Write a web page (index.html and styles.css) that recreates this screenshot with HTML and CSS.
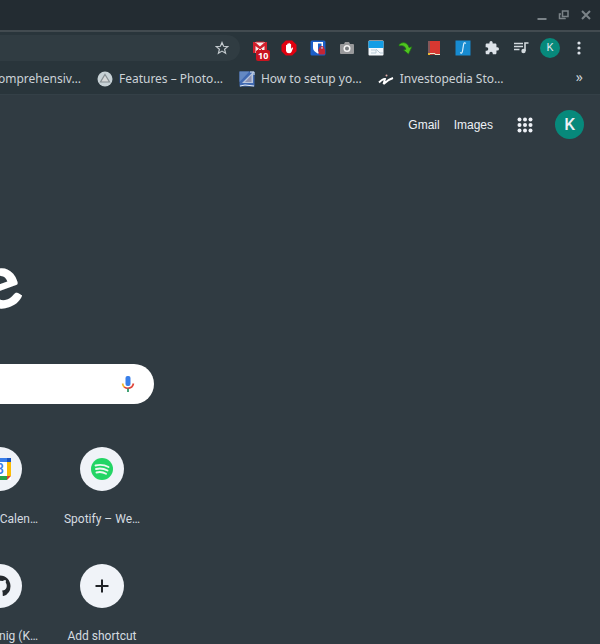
FILE: index.html
```html
<!DOCTYPE html>
<html lang="en">
<head>
<meta charset="utf-8">
<title>New Tab</title>
<link rel="stylesheet" href="styles.css">
</head>
<body>
<div class="titlebar">
  <button class="win" aria-label="Minimize"><svg width="12" height="12" viewBox="0 0 12 12"><path d="M1.500 10h9" stroke="#7b8388" stroke-width="2"/></svg></button>
  <button class="win" aria-label="Restore"><svg width="12" height="12" viewBox="0 0 12 12" fill="none" stroke="#7b8388" stroke-width="1.500"><path d="M4.500 2h5.500v5.500h-5.500zM3 5H1.500v4.500H7V9"/></svg></button>
  <button class="win" aria-label="Close"><svg width="12" height="12" viewBox="0 0 12 12"><path d="M2 2l8 8M10 2l-8 8" stroke="#7b8388" stroke-width="2"/></svg></button>
</div>
<div class="toolbar">
  <div class="omnibox">
    <button class="star" aria-label="Bookmark"><svg width="14" height="14" viewBox="0 0 14 14"><path d="M7 1.500l1.600 3.800 4.100.3-3.100 2.700 1 4L7 10.100l-3.600 2.200 1-4L1.300 5.600l4.100-.3z" fill="none" stroke="#c3cace" stroke-width="1.200"/></svg></button>
  </div>
  <div class="extensions">
    <button class="ext" aria-label="Mail checker"><svg width="16" height="16" viewBox="0 0 16 16"><path d="M1 2h14v11H1z" fill="#f5eeee"/><path d="M1 13V2h2l5 4.500L13 2h2v11h-2.500V6L8 9.500 3.500 6v7z" fill="#d21f2b"/><path d="M4 12l3-3M12 12L9 9M4 2h8" stroke="#d21f2b"/></svg><span class="count">10</span></button>
    <button class="ext" aria-label="Ad blocker"><svg width="16" height="16" viewBox="0 0 16 16"><path d="M4.800.5h6.400l4.300 4.300v6.400l-4.300 4.300H4.800L.5 11.200V4.800z" fill="#e0000f"/><path d="M5 9V5.200q.6-.8 1.200 0V4q.7-.9 1.300 0v-.8q.7-.8 1.300 0V4q.8-.8 1.300.2V9l1-1.500q1-.3 1 .4L10.500 12q-.7 1.300-2.500 1.300-2.500 0-3-2.300z" fill="#fff"/></svg></button>
    <button class="ext" aria-label="Password manager"><svg width="16" height="16" viewBox="0 0 16 16"><rect x=".5" y=".5" width="15" height="15" rx="1.500" fill="#1b5fc9"/><path d="M3 2h10v6q0 3-5 5.700Q3 11 3 8z" fill="#fff"/><path d="M8 3.500h3.500V8q0 2-3.500 4z" fill="#1b5fc9"/><rect x="8.500" y="8.500" width="6.500" height="6" rx="1" fill="#c52634"/><path d="M10 9V7.500q1.700-2 3.400 0V9" fill="none" stroke="#c52634" stroke-width="1.200"/></svg></button>
    <button class="ext" aria-label="Screenshot"><svg width="16" height="16" viewBox="0 0 16 16"><path d="M2 4h3l1-2h4l1 2h3q1 0 1 1v8q0 1-1 1H2q-1 0-1-1V5q0-1 1-1z" fill="#98999b"/><circle cx="8" cy="8.500" r="3.500" fill="#f4f4f4"/><circle cx="8" cy="8.500" r="2" fill="#777b7e"/></svg></button>
    <button class="ext" aria-label="Window tool"><svg width="16" height="16" viewBox="0 0 16 16"><rect x=".5" y=".5" width="15" height="15" rx="1" fill="#f4f8fb"/><path d="M.5 1h15v7H.5z" fill="#139de5"/><path d="M3 10h5v3H3M8 9l4 4h3" fill="none" stroke="#b9cbd7"/></svg></button>
    <button class="ext" aria-label="Download tool"><svg width="16" height="16" viewBox="0 0 16 16"><path d="M2 4.500Q7 .5 11 5l1 2.500 3-.8-3.500 7.500L6.500 10l2.500-.8Q7.500 4.500 2 6z" fill="#4fc51f" stroke="#1c6518" stroke-width=".7"/></svg></button>
    <button class="ext" aria-label="Dictionary"><svg width="16" height="16" viewBox="0 0 16 16"><path d="M3.500 1H14v13l-10 1z" fill="#d83831"/><path d="M2 1h2v12.500L2 14z" fill="#85575a"/><path d="M2.500 13.500H9v1H14" fill="none" stroke="#ede5c7"/><path d="M2 13h2v2H2z" fill="#efb933"/></svg></button>
    <button class="ext" aria-label="Function tool"><svg width="16" height="16" viewBox="0 0 16 16"><path d="M.5.5h15v15H.5z" fill="#178bd0"/><path d="M10.800 3.500Q9 1.500 8.500 5L7.500 11Q7 14.200 5.200 12.500" fill="none" stroke="#d8effc" stroke-width="1.200"/></svg></button>
    <button class="ext" aria-label="Extensions"><svg width="14" height="14" viewBox="1 1 22 22"><path fill="#dce2e8" d="M20.500 11H19V7c0-1.100-.9-2-2-2h-4V3.500a2.500 2.500 0 0 0-5 0V5H4c-1.100 0-2 .9-2 2v3.800h1.500a2.700 2.700 0 0 1 0 5.400H2V20c0 1.100.9 2 2 2h3.800v-1.500a2.700 2.700 0 0 1 5.400 0V22H17c1.100 0 2-.9 2-2v-4h1.500a2.500 2.500 0 0 0 0-5z"/></svg></button>
    <button class="ext" aria-label="Media"><svg width="16" height="16" viewBox="0 0 16 16"><path d="M1 3.500h9M1 6.500h9M1 9.500h5.500" stroke="#d3dade" stroke-width="1.500"/><path d="M12 11V3h3.500" fill="none" stroke="#d3dade" stroke-width="1.600"/><circle cx="10.500" cy="11" r="2.200" fill="#d3dade"/></svg></button>
    <button class="ext small-avatar" aria-label="Profile">K</button>
    <button class="ext" aria-label="Menu"><svg width="16" height="16" viewBox="0 0 16 16" fill="#dce2e8"><circle cx="8" cy="3" r="1.600"/><circle cx="8" cy="8" r="1.600"/><circle cx="8" cy="13" r="1.600"/></svg></button>
  </div>
</div>
<nav class="bookmarks">
  <a class="bookmark first" href="#">omprehensiv…</a>
  <a class="bookmark" href="#"><svg width="16" height="16" viewBox="0 0 16 16"><circle cx="8" cy="8" r="7.500" fill="#c7d2d6"/><path d="M8 3.500l4.500 7.500h-9z" fill="#d6d9d9" stroke="#858e92" stroke-width="1.200"/></svg>Features – Photo…</a>
  <a class="bookmark" href="#"><svg width="16" height="16" viewBox="0 0 16 16"><path d="M.5.5h15v15H.5z" fill="#416ab2"/><path d="M.5.5h10L.5 11z" fill="#6489c3"/><path d="M14 1v11H3z" fill="#b8c6dd"/><path d="M12.500 4v7H6z" fill="#8d91af"/><path d="M1 15l5-1 9 1M11 1h4v3" fill="none" stroke="#e3ebf3"/></svg>How to setup yo…</a>
  <a class="bookmark" href="#"><svg width="16" height="16" viewBox="0 0 16 16"><path d="M1 11.500Q5 7.500 7 8L5.500 13Q10 8.500 15 7" fill="none" stroke="#fff" stroke-width="1.900"/><circle cx="8.500" cy="4.500" r="1" fill="#e4afa9"/></svg>Investopedia Sto…</a>
  <button class="more" aria-label="More bookmarks">»</button>
</nav>
<main class="page">
  <header class="links">
    <a href="#">Gmail</a>
    <a href="#">Images</a>
    <button class="apps" aria-label="Apps"><svg width="16" height="16" viewBox="0 0 16 16" fill="#eef1f6"><circle cx="2.500" cy="2.500" r="2"/><circle cx="8" cy="2.500" r="2"/><circle cx="13.500" cy="2.500" r="2"/><circle cx="2.500" cy="8" r="2"/><circle cx="8" cy="8" r="2"/><circle cx="13.500" cy="8" r="2"/><circle cx="2.500" cy="13.500" r="2"/><circle cx="8" cy="13.500" r="2"/><circle cx="13.500" cy="13.500" r="2"/></svg></button>
    <button class="avatar" aria-label="Account">K</button>
  </header>
  <div class="logo"><span class="letter">e</span></div>
  <form class="search">
    <input class="query" type="text" aria-label="Search">
    <button class="mic" type="button" aria-label="Voice search"><svg width="16" height="20" viewBox="0 0 16 20"><rect x="5.500" y="2" width="5" height="10" rx="2" fill="#397fe9"/><path d="M2.500 9.500Q3 12 4.500 13.300" fill="none" stroke="#f5b928" stroke-width="1.700"/><path d="M4.300 13.100Q8 15.500 11.700 13Q13 11.500 13.500 9.500" fill="none" stroke="#df4438" stroke-width="1.700"/><path d="M8 14.500V18" stroke="#319b69" stroke-width="1.800"/></svg></button>
  </form>
  <div class="shortcuts">
    <a class="tile cut" href="#"><span class="disc"><svg width="24" height="24" viewBox="0 0 24 24"><path d="M1 1h22v22H1z" fill="#fff"/><path d="M1 1h18v4H1z" fill="#397de8"/><path d="M19 1h4v4h-4z" fill="#1c55bd"/><path d="M19 5h4v14h-4z" fill="#fbbc04"/><path d="M1 19h18v4H1z" fill="#2aa149"/><path d="M19 19h4l-4 4z" fill="#d8412f"/><text x="8" y="17" class="day">3</text></svg></span><span class="name">Calen…</span></a>
    <a class="tile" href="#"><span class="disc"><svg width="22" height="22" viewBox="0 0 22 22"><circle cx="11" cy="11" r="11" fill="#23d565"/><path d="M4.500 7.500q7-1.700 13 1.500M5 11q6-1.500 11.500 1.500M5.500 14.500q5-1.300 9.500 1.300" fill="none" stroke="#edf8f1" stroke-width="1.900" stroke-linecap="round"/></svg></span><span class="name">Spotify – We…</span></a>
    <a class="tile cut" href="#"><span class="disc"><svg width="24" height="24" viewBox="0 0 16 16"><path fill="#252a2e" fill-rule="evenodd" d="M8 1C4.100 1 1 4.100 1 8c0 3.100 2 5.700 4.800 6.600.3.100.5-.1.500-.3v-1.200c-2 .4-2.400-.9-2.400-.9-.3-.8-.8-1-.8-1-.6-.4.100-.4.100-.4.700 0 1.100.7 1.100.7.600 1.100 1.600.8 2 .6.100-.5.200-.8.400-.9-1.500-.2-3.200-.8-3.200-3.500 0-.7.300-1.400.8-1.900-.1-.2-.4-.9.100-1.800 0 0 .6-.2 1.900.7a6.700 6.700 0 0 1 3.500 0c1.300-.9 1.900-.7 1.900-.7.400.9.200 1.600.1 1.800.4.500.7 1.100.7 1.900 0 2.700-1.600 3.300-3.200 3.500.3.200.5.700.5 1.300v1.900c0 .2.100.4.500.3A7 7 0 0 0 15 8c0-3.900-3.100-7-7-7z"/></svg></span><span class="name">nig (K…</span></a>
    <button class="tile"><span class="disc"><svg width="14" height="14" viewBox="0 0 14 14"><path d="M7 .5v13M.5 7h13" stroke="#202327" stroke-width="2"/></svg></span><span class="name">Add shortcut</span></button>
  </div>
</main>
</body>
</html>
```
FILE: styles.css
```css
* { box-sizing: border-box; }
body {
  margin: 0;
  min-height: 100vh;
  overflow: hidden;
  display: flex;
  flex-direction: column;
  background: #303b42;
  color: #dfe5ea;
  font-family: "Noto Sans", sans-serif;
  font-size: 12px;
}
button {
  padding: 0;
  border: 0;
  background: none;
  color: inherit;
  font: inherit;
}
a { color: inherit; text-decoration: none; }
svg { display: block; flex: none; }

.titlebar {
  height: 32px;
  display: flex;
  justify-content: flex-end;
  align-items: center;
  gap: 10px;
  padding-right: 8px;
  background: #232c32;
  border-bottom: 2px solid #424b50;
}

.toolbar {
  height: 32px;
  display: flex;
  align-items: center;
  background: #29353b;
}
.omnibox {
  flex: 1;
  height: 26px;
  display: flex;
  align-items: center;
  justify-content: flex-end;
  padding-right: 11px;
  border-radius: 0 13px 13px 0;
  background: #303c42;
}
.extensions {
  display: flex;
  gap: 9px;
  padding: 0 11px 0 10px;
}
.ext {
  position: relative;
  width: 20px;
  height: 20px;
  display: flex;
  align-items: center;
  justify-content: center;
}
.count {
  position: absolute;
  left: 6px;
  top: 12px;
  padding: 0 2px;
  border-radius: 2px;
  background: #c8141f;
  color: #fff;
  font: bold 9px/11px "Open Sans", sans-serif;
}
.small-avatar {
  border-radius: 50%;
  background: #07897b;
  font: 11px/20px Roboto, sans-serif;
}

.bookmarks {
  height: 31px;
  display: flex;
  align-items: center;
  gap: 16px;
  padding: 0 17px 1px 0;
  background: #29353b;
  border-bottom: 1px solid #344047;
  color: #cbd2d7;
  white-space: nowrap;
}
.bookmark {
  display: flex;
  align-items: center;
  gap: 6px;
}
.first { margin-left: -2px; }
.more { margin-left: auto; font-size: 14px; line-height: 16px; padding-bottom: 3px; }

.page { flex: 1; }
.links {
  display: flex;
  align-items: center;
  justify-content: flex-end;
  gap: 14px;
  padding: 15px 16px 0 0;
  font: 12px "Liberation Sans", sans-serif;
  color: #eef1f6;
}
.apps { margin: 0 8px 0 10px; }
.avatar {
  width: 29px;
  height: 29px;
  border-radius: 50%;
  background: #07897b;
  font: 500 17px/29px Roboto, sans-serif;
}
.logo {
  width: 18px;
  height: 80px;
  margin-top: 101px;
  display: flex;
  justify-content: flex-end;
  color: #fff;
  font: 900 76px/80px Lato, sans-serif;
}
.letter { transform: rotate(-20deg); }
.search {
  width: 154px;
  height: 40px;
  margin-top: 44px;
  display: flex;
  align-items: center;
  padding-right: 18px;
  border-radius: 0 20px 20px 0;
  background: #fff;
}
.query {
  flex: 1;
  min-width: 0;
  border: 0;
  outline: 0;
  background: none;
}
.shortcuts {
  display: grid;
  grid-template-columns: 51px 102px;
  row-gap: 35px;
  margin-top: 43px;
}
.tile {
  display: flex;
  flex-direction: column;
  align-items: center;
  gap: 18px;
}
.disc {
  width: 44px;
  height: 44px;
  display: flex;
  align-items: center;
  justify-content: center;
  border-radius: 50%;
  background: #f0f3f8;
}
.name {
  font: 12px/20px Roboto, sans-serif;
  color: #d5dbe0;
  white-space: nowrap;
}
.cut { align-items: flex-start; }
.cut .disc { margin-left: -22px; }
.cut .name { align-self: flex-end; padding-right: 13px; }
.day {
  fill: #397de8;
  font: 500 14px Roboto, sans-serif;
}
```
